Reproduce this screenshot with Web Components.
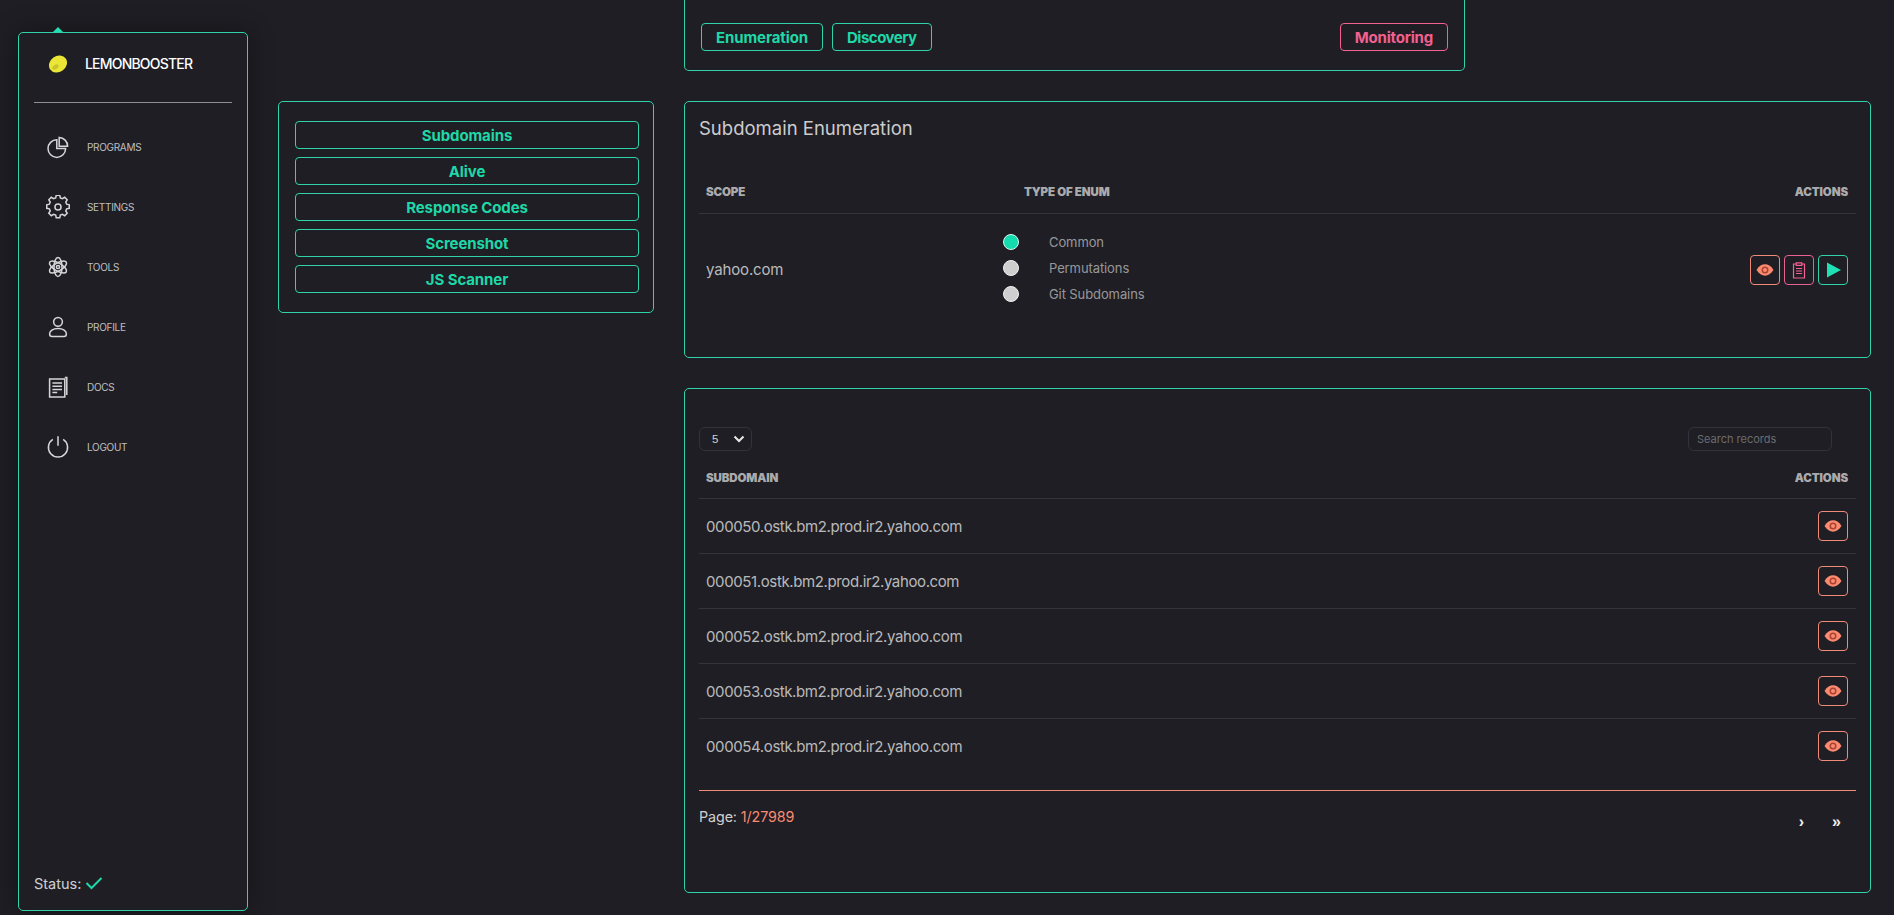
<!DOCTYPE html>
<html lang="en">
<head>
<meta charset="utf-8">
<title>LemonBooster</title>
<style>
  html, body { margin: 0; height: 100%; overflow: hidden; background: #1e1e24; }
  body { font-family: "Inter", "Noto Sans", sans-serif; color: rgba(255,255,255,.7); }
</style>
</head>
<body>
<lb-app></lb-app>
<script>
const ICONS = {
  programs: `<path d="M13.500 6A11 11 0 1 0 24.500 17H13.500z"/><path d="M16.500 3A11 11 0 0 1 27 14H16.500z"/>`,
  settings: `<circle cx="15" cy="15" r="3.800"/><path d="M12.800 2.500h4.400l.7 3.300 2.600 1.100 2.900-1.800 3.100 3.100-1.800 2.900 1.100 2.600 3.300.7v4.400l-3.300.7-1.100 2.600 1.800 2.900-3.100 3.100-2.900-1.800-2.600 1.100-.7 3.300h-4.400l-.7-3.300-2.600-1.100-2.900 1.800-3.100-3.100 1.800-2.900-1.100-2.600-3.300-.7v-4.400l3.300-.7 1.100-2.600-1.800-2.900 3.100-3.100 2.900 1.800 2.600-1.100z" transform="translate(0 -2.200)"/>`,
  tools: `<ellipse cx="15" cy="15" rx="5" ry="12"/><ellipse cx="15" cy="15" rx="5" ry="12" transform="rotate(60 15 15)"/><ellipse cx="15" cy="15" rx="5" ry="12" transform="rotate(120 15 15)"/><circle cx="15" cy="15" r="2"/>`,
  profile: `<circle cx="15" cy="8.500" r="5.500"/><path d="M15 17c-6.500 0-10.500 3-10.500 6.500 0 2.300 1.300 3.500 3 3.500h15c1.700 0 3-1.200 3-3.500C25.500 20 21.500 17 15 17z"/>`,
  docs: `<path d="M4.500 5h19v22.500h-19z"/><path d="M23.500 3H26v22"/><path d="M8 10h12M8 14h12M8 18h12M8 22h6"/>`,
  logout: `<path d="M8.500 5.500a12 12 0 1 0 13 0"/><path d="M15 1.500v12"/>`
};

class LbNavItem extends HTMLElement {
  constructor() {
    super();
    this.attachShadow({ mode: "open" }).innerHTML = `
      <style>
        :host { display: flex; align-items: center; height: 60px; padding-left: 12px; }
        svg { width: 24px; height: 24px; fill: none; stroke: #d6d6d8; stroke-width: 1.900; margin-right: 17px; flex: none; }
        span { font-size: 10px; letter-spacing: -.3px; text-transform: uppercase; color: rgba(255,255,255,.72); }
      </style>
      <svg viewBox="0 0 30 30">${ICONS[this.getAttribute("icon")]}</svg>
      <span><slot></slot></span>`;
  }
}
customElements.define("lb-nav-item", LbNavItem);

class LbSidebar extends HTMLElement {
  constructor() {
    super();
    this.attachShadow({ mode: "open" }).innerHTML = `
      <style>
        :host {
          display: flex; flex-direction: column; position: relative; box-sizing: border-box;
          width: 230px; height: 879px; margin-top: 32px; padding: 0 15px;
          border: 1px solid #2fd4aa; border-radius: 5px; background: #1e1e24;
          box-shadow: 0 0 26px 2px rgba(0,0,0,.32);
        }
        :host::before {
          content: ""; position: absolute; top: -6px; left: 34px; width: 0; height: 0;
          border: 5px solid transparent; border-top: 0; border-bottom: 5px solid #1fe0b4;
        }
        .logo { display: flex; align-items: center; box-sizing: border-box; height: 70px; padding: 0 0 8px 14px; border-bottom: 1px solid rgba(255,255,255,.5); }
        .logo svg { width: 20px; height: 20px; margin-right: 17px; flex: none; }
        .logo span { font-size: 14px; font-weight: 500; letter-spacing: -.8px; color: #fff; }
        nav { margin-top: 14px; flex: 1; }
        .status { display: flex; align-items: center; font-size: 14.500px; margin-bottom: 15px; height: 24px; color: rgba(255,255,255,.8); }
        .status svg { width: 18px; height: 14px; margin-left: 4px; fill: none; stroke: #1fd8a8; stroke-width: 2; }
      </style>
      <div class="logo">
        <svg viewBox="0 0 20 20"><ellipse cx="10" cy="10" rx="9.500" ry="8" transform="rotate(-35 10 10)" fill="#ebe535"/><ellipse cx="7.500" cy="13" rx="3.500" ry="2" fill="#c9c32c" transform="rotate(-35 7.500 13)"/></svg>
        <span>LEMONBOOSTER</span>
      </div>
      <nav>
        <lb-nav-item icon="programs">Programs</lb-nav-item>
        <lb-nav-item icon="settings">Settings</lb-nav-item>
        <lb-nav-item icon="tools">Tools</lb-nav-item>
        <lb-nav-item icon="profile">Profile</lb-nav-item>
        <lb-nav-item icon="docs">Docs</lb-nav-item>
        <lb-nav-item icon="logout">Logout</lb-nav-item>
      </nav>
      <div class="status">Status:<svg viewBox="0 0 18 14"><path d="M1.500 7l5 5L16.500 2"/></svg></div>`;
  }
}
customElements.define("lb-sidebar", LbSidebar);

class LbPanel extends HTMLElement {
  constructor() {
    super();
    this.attachShadow({ mode: "open" }).innerHTML = `
      <style>
        :host { display: block; box-sizing: border-box; border: 1px solid #2fd4aa; border-radius: 5px; background: #1e1e24; }
      </style>
      <slot></slot>`;
  }
}
customElements.define("lb-panel", LbPanel);

class LbOutlineButton extends HTMLElement {
  constructor() {
    super();
    this.attachShadow({ mode: "open" }).innerHTML = `
      <style>
        :host {
          display: flex; align-items: center; justify-content: center; box-sizing: border-box;
          height: 28px; padding: 0 14px; border: 1px solid #2fd4aa; border-radius: 4px;
          color: #1fd8a8; font-size: 15px; font-weight: 700; letter-spacing: -.1px;
        }
        :host([danger]) { color: #f4608f; border-color: #f4608f; letter-spacing: -.2px; }
        :host([tight]) { letter-spacing: -.5px; }
      </style>
      <slot></slot>`;
  }
}
customElements.define("lb-outline-button", LbOutlineButton);

const BUTTON_ICONS = {
  eye: `<path fill="#fb8a70" d="M1.500 10C4 6 7 4.300 10 4.300S16 6 18.500 10C16 14 13 15.700 10 15.700S4 14 1.500 10z"/><circle cx="10" cy="10" r="3.500" fill="#a8432f"/><circle cx="10" cy="10" r="2" fill="#fb8a70"/>`,
  clipboard: `<g fill="none" stroke="#f4608f" stroke-width="1.200"><path d="M7.200 4H4.500v14h11V4h-2.700"/><path d="M7.200 2.800h5.600v2.600H7.200z"/><path d="M7 8.500h6M7 11h6M7 13.500h6"/></g>`,
  play: `<path fill="#1fe0b4" d="M4 2.500L18 10 4 17.500z"/>`
};

class LbIconButton extends HTMLElement {
  constructor() {
    super();
    const kind = this.getAttribute("icon");
    const border = { eye: "#f08a78", clipboard: "#e9628f", play: "#2fd4aa" }[kind];
    this.attachShadow({ mode: "open" }).innerHTML = `
      <style>
        :host {
          display: flex; align-items: center; justify-content: center; box-sizing: border-box; flex: none;
          width: 30px; height: 30px; border: 1px solid ${border}; border-radius: 4px;
        }
        svg { width: 20px; height: 20px; }
      </style>
      <svg viewBox="0 0 20 20">${BUTTON_ICONS[kind]}</svg>`;
  }
}
customElements.define("lb-icon-button", LbIconButton);

class LbRadio extends HTMLElement {
  constructor() {
    super();
    this.attachShadow({ mode: "open" }).innerHTML = `
      <style>
        :host { display: flex; align-items: center; height: 26px; }
        i { box-sizing: border-box; width: 16px; height: 16px; border-radius: 50%; background: #cfcfcf; border: 1.500px solid #f2f2f2; margin-right: 30px; flex: none; }
        :host([checked]) i { background: #13dcae; border-color: #d8faf0; }
        span { font-size: 13px; letter-spacing: -.1px; color: rgba(255,255,255,.55); }
      </style>
      <i></i><span><slot></slot></span>`;
  }
}
customElements.define("lb-radio", LbRadio);

class LbSubdomainRow extends HTMLElement {
  constructor() {
    super();
    this.attachShadow({ mode: "open" }).innerHTML = `
      <style>
        :host {
          display: flex; align-items: center; justify-content: space-between; box-sizing: border-box;
          height: 55px; padding: 0 8px 0 7px; border-top: 1px solid rgba(255,255,255,.1);
        }
        span { font-size: 15px; letter-spacing: -.38px; color: rgba(255,255,255,.7); }
      </style>
      <span><slot></slot></span>
      <lb-icon-button icon="eye"></lb-icon-button>`;
  }
}
customElements.define("lb-subdomain-row", LbSubdomainRow);

class LbEnumPanel extends HTMLElement {
  constructor() {
    super();
    this.attachShadow({ mode: "open" }).innerHTML = `
      <style>
        :host { display: block; height: 257px; }
        lb-panel { height: 100%; padding: 0 14px; }
        h2 { margin: 0; height: 80px; padding-top: 13px; box-sizing: border-box; font-size: 18.500px; font-weight: 400; color: rgba(255,255,255,.78); line-height: 27px; }
        .head { display: grid; grid-template-columns: 318px 1fr auto; align-items: center; height: 20px; padding: 0 8px 0 7px; font-size: 11.500px; font-weight: 900; letter-spacing: -.1px; color: rgba(255,255,255,.65); }
        .line { height: 1px; background: rgba(255,255,255,.1); margin-top: 11px; }
        .row { display: grid; grid-template-columns: 297px 1fr auto; align-items: center; height: 112px; padding: 0 8px 0 7px; }
        .scope { font-size: 15px; letter-spacing: -.15px; color: rgba(255,255,255,.7); margin-bottom: 2px; }
        .radios { margin-bottom: 5px; }
        .actions { display: flex; gap: 4px; }
      </style>
      <lb-panel>
        <h2>Subdomain Enumeration</h2>
        <div class="head"><span>SCOPE</span><span>TYPE OF ENUM</span><span>ACTIONS</span></div>
        <div class="line"></div>
        <div class="row">
          <span class="scope">yahoo.com</span>
          <div class="radios">
            <lb-radio checked>Common</lb-radio>
            <lb-radio>Permutations</lb-radio>
            <lb-radio>Git Subdomains</lb-radio>
          </div>
          <div class="actions">
            <lb-icon-button icon="eye"></lb-icon-button>
            <lb-icon-button icon="clipboard"></lb-icon-button>
            <lb-icon-button icon="play"></lb-icon-button>
          </div>
        </div>
      </lb-panel>`;
  }
}
customElements.define("lb-enum-panel", LbEnumPanel);

class LbSubdomainTable extends HTMLElement {
  constructor() {
    super();
    const names = ["000050", "000051", "000052", "000053", "000054"]
      .map((n) => `<lb-subdomain-row>${n}.ostk.bm2.prod.ir2.yahoo.com</lb-subdomain-row>`)
      .join("");
    this.attachShadow({ mode: "open" }).innerHTML = `
      <style>
        :host { display: block; height: 505px; }
        lb-panel { height: 100%; padding: 38px 14px 0; }
        .tools { display: flex; justify-content: space-between; height: 24px; padding-right: 24px; }
        .select { display: flex; align-items: center; justify-content: space-between; box-sizing: border-box; width: 53px; height: 24px; padding: 0 3px 0 12px; border: 1px solid #32323f; border-radius: 6px; font: 11.500px "Liberation Sans", sans-serif; color: rgba(255,255,255,.8); }
        .select svg { width: 12px; height: 8px; margin-right: 3px; fill: none; stroke: #e8e8e8; stroke-width: 2; }
        input { box-sizing: border-box; width: 144px; height: 24px; padding: 0 8px; background: transparent; border: 1px solid #32323f; border-radius: 6px; font: 11px "Inter", sans-serif; color: #fff; outline: none; }
        input::placeholder { color: rgba(255,255,255,.35); opacity: 1; }
        .head { display: flex; justify-content: space-between; align-items: center; height: 20px; margin-top: 17px; padding: 0 8px 0 7px; font-size: 11.500px; font-weight: 900; letter-spacing: -.1px; color: rgba(255,255,255,.65); }
        .rows { margin-top: 10px; }
        .foot { border-top: 1px solid #f08a78; margin-top: 17px; display: flex; justify-content: space-between; }
        .page { font-size: 14.300px; letter-spacing: -.1px; line-height: 20px; margin-top: 16px; color: rgba(255,255,255,.8); }
        .page b { font-weight: 400; color: #fb8a70; }
        .nav { display: flex; margin-top: 21px; padding-right: 15px; gap: 28px; font: 700 16px/20px "Liberation Sans", sans-serif; color: #f0f0f0; }
      </style>
      <lb-panel>
        <div class="tools">
          <div class="select"><span>5</span><svg viewBox="0 0 12 8"><path d="M1.500 1.500L6 6l4.500-4.500"/></svg></div>
          <input placeholder="Search records">
        </div>
        <div class="head"><span>SUBDOMAIN</span><span>ACTIONS</span></div>
        <div class="rows">${names}</div>
        <div class="foot">
          <div class="page">Page: <b>1/27989</b></div>
          <div class="nav"><span>›</span><span>»</span></div>
        </div>
      </lb-panel>`;
  }
}
customElements.define("lb-subdomain-table", LbSubdomainTable);

class LbApp extends HTMLElement {
  constructor() {
    super();
    this.attachShadow({ mode: "open" }).innerHTML = `
      <style>
        :host { display: flex; align-items: flex-start; gap: 30px; height: 915px; padding: 0 23px 0 18px; box-sizing: border-box; }
        .menu { box-sizing: border-box; width: 376px; height: 212px; margin-top: 101px; padding: 19px 14px 0 16px; flex: none; }
        .menu-list { display: flex; flex-direction: column; gap: 8px; }
        .main { flex: 1; display: flex; flex-direction: column; gap: 30px; }
        .tabs { width: 781px; height: 71px; border-top: 0; border-radius: 0 0 5px 5px; display: flex; align-items: flex-start; padding: 23px 16px 0 16px; box-sizing: border-box; }
        .tabs-row { display: flex; gap: 9px; flex: 1; }
        .tabs-row .end { margin-left: auto; }
      </style>
      <lb-sidebar></lb-sidebar>
      <lb-panel class="menu">
        <div class="menu-list">
          <lb-outline-button>Subdomains</lb-outline-button>
          <lb-outline-button>Alive</lb-outline-button>
          <lb-outline-button>Response Codes</lb-outline-button>
          <lb-outline-button>Screenshot</lb-outline-button>
          <lb-outline-button>JS Scanner</lb-outline-button>
        </div>
      </lb-panel>
      <div class="main">
        <lb-panel class="tabs">
          <div class="tabs-row">
            <lb-outline-button>Enumeration</lb-outline-button>
            <lb-outline-button tight>Discovery</lb-outline-button>
            <lb-outline-button class="end" danger>Monitoring</lb-outline-button>
          </div>
        </lb-panel>
        <lb-enum-panel></lb-enum-panel>
        <lb-subdomain-table></lb-subdomain-table>
      </div>`;
  }
}
customElements.define("lb-app", LbApp);
</script>
</body>
</html>
